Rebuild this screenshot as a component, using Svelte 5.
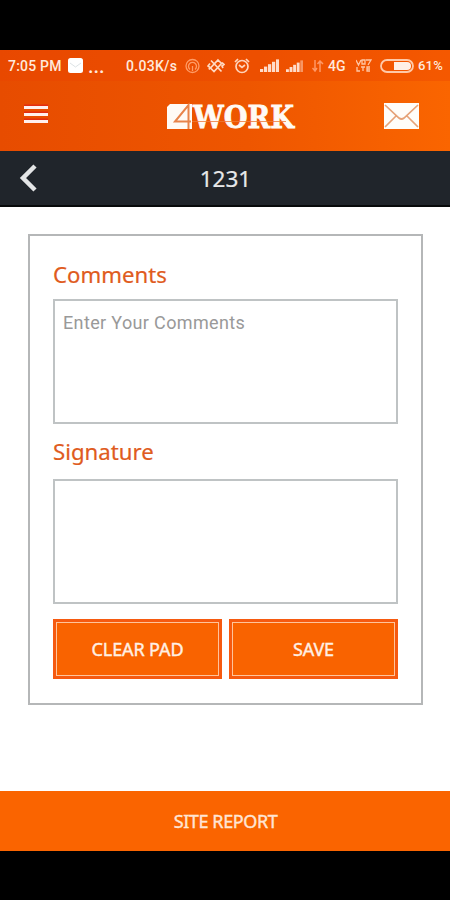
<script lang="ts">
  let comments = "";

  const bars = [0, 1, 2, 3, 4];
</script>

<div class="screen">
  <header>
    <div class="status">
      <span class="time">7:05 PM</span>
      <svg class="note" width="15" height="15" viewBox="0 0 15 15">
        <rect width="15" height="15" rx="2.5" fill="#fff" />
        <path d="M2 5l5.500 4 5.500-4" fill="none" stroke="#dde3e5" />
      </svg>
      <span class="dots">...</span>
      <span class="speed">0.03K/s</span>
      <svg class="hotspot" width="15" height="16" viewBox="0 0 15 16" fill="none" stroke="#ff9c66" stroke-width="1.300">
        <circle cx="7.500" cy="8" r="6.500" />
        <path d="M5 11.500a4 4 0 1 1 5 0M7.500 8v5" />
      </svg>
      <svg class="vibrate" width="18" height="16" viewBox="0 0 18 16" fill="none" stroke="#ffd9c2" stroke-width="1.700">
        <path d="M11 2l3.500 3.500-7.500 8L3.500 10zM4 2.500l10.500 11M3 5.500L1 8l2 1.500-1 2M15 4.500l2 2-2 1.500 1 2" />
      </svg>
      <svg class="alarm" width="16" height="16" viewBox="0 0 16 16" fill="none" stroke="#ffd4bb" stroke-width="1.700">
        <circle cx="8" cy="8.500" r="6" />
        <path d="M1 4l3-3M15 4l-3-3M5 7l3 2.500L11 7" />
      </svg>
      <svg class="signal" width="19" height="13" viewBox="0 0 19 13" fill="#ffdcca">
        {#each bars as i}
          <rect x={i * 4} y={10 - i * 2.4} width="3.2" height={3 + i * 2.4} />
        {/each}
      </svg>
      <svg class="signal second" width="17" height="12" viewBox="0 0 19 13" preserveAspectRatio="none" fill="#ffdcca">
        {#each bars as i}
          <rect x={i * 4} y={10 - i * 2.4} width="3.2" height={3 + i * 2.4} opacity={i === 4 ? 0.5 : 1} />
        {/each}
      </svg>
      <svg class="data" width="12" height="12" viewBox="0 0 12 12" fill="none" stroke="#ff9866" stroke-width="1.500">
        <path d="M3 0v10M0.500 8L3 11l2-3M8 12V2M5.500 4L8 1l3 3" />
      </svg>
      <span class="net">4G</span>
      <svg class="volte" width="16" height="13" viewBox="0 0 16 13" fill="none" stroke="#ffc6a4" stroke-width="1.300">
        <path d="M0 1l2.500 5L5 1M6 1h3v4H6zM10 1h5l-3 5M1 8v4h3M5 8h4M7 8v4M14 8h-3v4h3M11 10h3" />
      </svg>
      <svg class="battery" width="35" height="14" viewBox="0 0 35 14">
        <rect x="1" y="1" width="32" height="12" rx="6" fill="none" stroke="#ffc9a8" stroke-width="1.800" />
        <path d="M14 3h13a4 4 0 0 1 0 8H14z" fill="#fff0e6" />
      </svg>
      <span class="percent">61%</span>
    </div>

    <div class="nav">
      <svg class="menu" width="24" height="22" viewBox="0 0 24 22">
        <path d="M0 2.500h24M0 9.500h24M0 16.500h24" stroke="#e32d10" stroke-width="2" />
        <path d="M0 4.500h24M0 11.500h24M0 18.500h24" stroke="#fff0ed" stroke-width="3" />
      </svg>
      <svg class="logo" width="136" height="60" viewBox="0 0 136 60">
        <path d="M4 18h22v25H1V21z" fill="#fffaf5" />
        <path d="M22.500 43V19L9 35.500h16" fill="none" stroke="#e8834a" stroke-width="2" />
        <text x="27" y="42" textLength="101" lengthAdjust="spacingAndGlyphs">WORK</text>
        <path d="M26 35.500h94" stroke="#ee7b3a" stroke-width="0.800" />
      </svg>
      <svg class="mail" width="35" height="26" viewBox="0 0 35 26">
        <rect width="35" height="26" fill="#fffdf9" />
        <path d="M1 2l14 13q2.500 2 5 0L34 2M1 24l11-11M34 24L23 13" fill="none" stroke="#e6a277" stroke-width="1.700" />
      </svg>
    </div>
  </header>

  <div class="title">
    <svg width="20" height="30" viewBox="0 0 20 30">
      <path d="M17 3L5 15l12 12" fill="none" stroke="#e3e5e6" stroke-width="4.500" />
    </svg>
    <h1>1231</h1>
  </div>

  <main>
    <div class="panel">
      <label for="comments">Comments</label>
      <textarea id="comments" placeholder="Enter Your Comments" bind:value={comments}></textarea>
      <h2>Signature</h2>
      <div class="pad"></div>
      <div class="buttons">
        <button><span>CLEAR PAD</span></button>
        <button><span>SAVE</span></button>
      </div>
    </div>
  </main>

  <footer>SITE REPORT</footer>
</div>

<style>
  :global(body) {
    background: #000;
  }

  .screen {
    box-sizing: border-box;
    width: 450px;
    height: 900px;
    padding: 50px 0 49px;
    display: flex;
    flex-direction: column;
    background: #000;
    font-family: "Noto Sans", "Open Sans", sans-serif;
    overflow: hidden;
  }

  svg {
    display: block;
    flex: none;
  }

  header {
    height: 101px;
    flex: none;
    background: linear-gradient(90deg, #e74c00, #ee5600 55%, #fa6500);
  }

  .status {
    height: 31px;
    display: flex;
    align-items: center;
    background: rgba(235, 65, 0, 0.35);
    color: #ffe9dc;
    font: 500 13px Roboto, sans-serif;
    white-space: nowrap;
  }

  .status span {
    flex: none;
  }

  .time {
    width: 54px;
    margin-left: 8px;
    font-size: 14px;
    letter-spacing: 0.2px;
  }

  .note {
    margin-left: 6px;
  }

  .dots {
    width: 16px;
    margin-left: 5px;
    font-size: 20px;
  }

  .speed {
    width: 52px;
    margin-left: 22px;
    font-size: 14px;
    letter-spacing: 0.3px;
  }

  .hotspot {
    margin-left: 7px;
  }

  .vibrate {
    margin-left: 7px;
  }

  .alarm {
    margin-left: 9px;
  }

  .signal {
    margin-left: 10px;
  }

  .signal.second {
    margin-left: 7px;
  }

  .data {
    margin-left: 9px;
  }

  .net {
    width: 19px;
    margin-left: 4px;
    font-size: 14px;
  }

  .volte {
    margin-left: 9px;
  }

  .battery {
    margin-left: 8px;
  }

  .percent {
    margin-left: 3px;
    letter-spacing: 0.2px;
  }

  .nav {
    height: 69px;
    padding: 0 31px 0 24px;
    display: flex;
    align-items: center;
    justify-content: space-between;
  }

  .menu {
    margin-bottom: 3px;
  }

  .logo {
    margin-left: 36px;
    overflow: visible;
  }

  .logo text {
    fill: #fffaf5;
    stroke: #fffaf5;
    stroke-width: 0.8px;
    font: bold 32px "DejaVu Serif", serif;
  }

  .title {
    height: 56px;
    flex: none;
    display: flex;
    align-items: center;
    padding: 0 18px;
    box-sizing: border-box;
    background: #20252b;
    border-bottom: 2px solid #080a0b;
  }

  h1 {
    flex: 1;
    margin: 2px 19px 0 0;
    color: #e7e8e9;
    font-size: 22.5px;
    font-weight: 400;
    line-height: 30px;
    text-align: center;
    -webkit-text-stroke: 0.2px;
  }

  main {
    flex: 1;
    padding: 27px 27px 0 28px;
    background: #fff;
  }

  .panel {
    box-sizing: border-box;
    height: 471px;
    padding: 24px 24px 0 23px;
    border: 2px solid #b5b7b8;
  }

  label,
  h2 {
    display: block;
    margin: 0;
    color: #df5b20;
    font-size: 22.2px;
    font-weight: 400;
    line-height: 30px;
    -webkit-text-stroke: 0.2px;
  }

  textarea,
  .pad {
    display: block;
    box-sizing: border-box;
    width: 345px;
    height: 125px;
    border: 2px solid #bfc3c4;
  }

  textarea {
    margin: 9px 0 13px;
    padding: 10px 8px;
    resize: none;
    outline: none;
    background: #fff;
    font: 18px/24px Roboto, sans-serif;
    letter-spacing: 0.36px;
  }

  textarea::placeholder {
    color: #999;
    opacity: 1;
  }

  .pad {
    margin-top: 12px;
  }

  .buttons {
    display: flex;
    gap: 7px;
    width: 345px;
    margin-top: 15px;
  }

  button {
    flex: 1;
    height: 60px;
    padding: 3px;
    border: 0;
    background: #f65a10;
    color: #fff0e4;
    font: 18px "Noto Sans", sans-serif;
    letter-spacing: -0.1px;
    -webkit-text-stroke: 0.4px;
  }

  button span {
    display: flex;
    align-items: center;
    justify-content: center;
    box-sizing: border-box;
    height: 54px;
    border: 1px solid #ffc49b;
    background: #f96300;
  }

  footer {
    height: 60px;
    flex: none;
    background: #fa6400;
    color: #ffe5d4;
    font-size: 18px;
    line-height: 60px;
    letter-spacing: -0.4px;
    text-align: center;
    text-indent: 1px;
    -webkit-text-stroke: 0.4px;
  }
</style>
